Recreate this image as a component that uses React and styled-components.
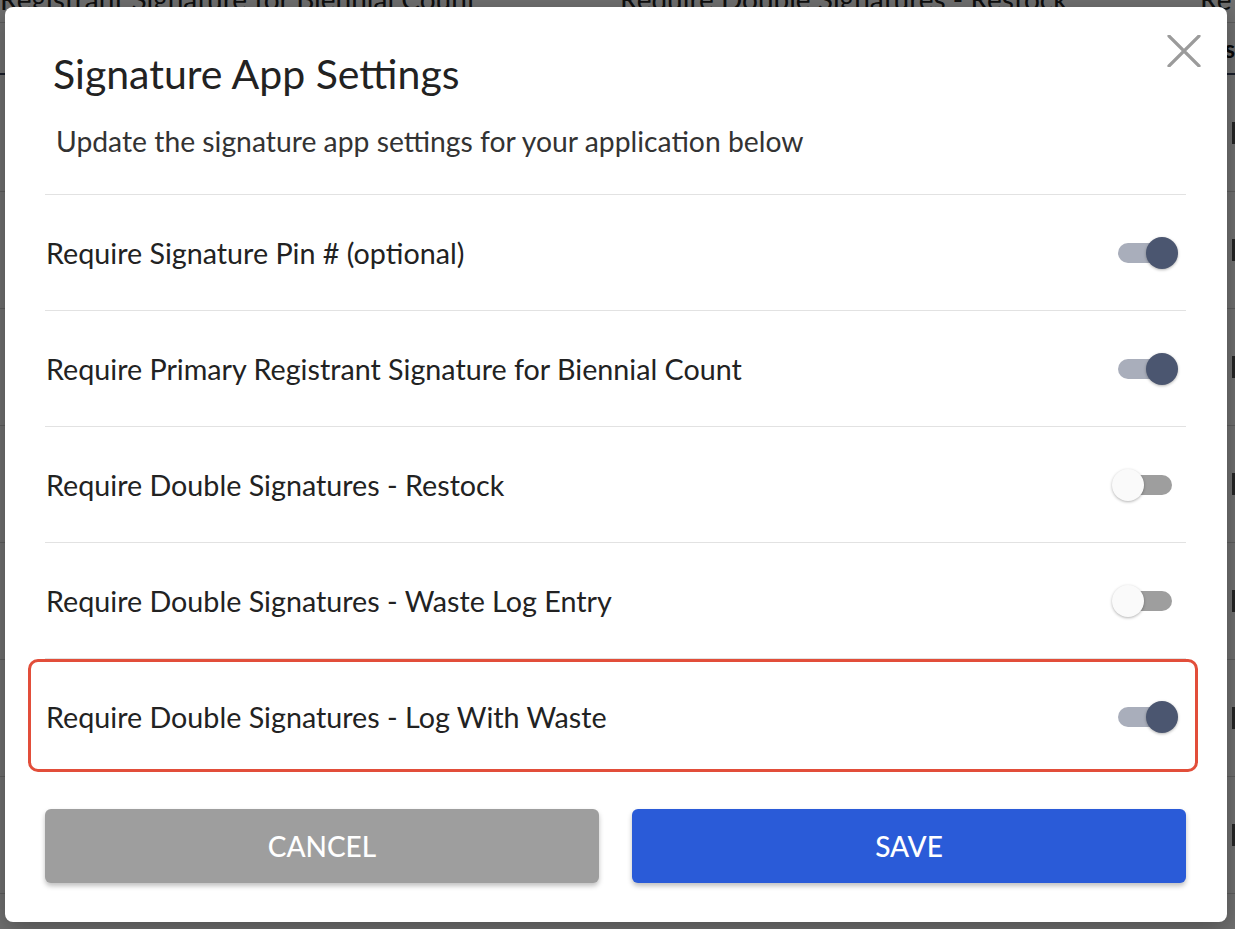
import React, { useState } from "react";
import styled, { createGlobalStyle } from "styled-components";

const GlobalStyle = createGlobalStyle`
  html, body {
    margin: 0;
    padding: 0;
    background: #ffffff;
  }
  body {
    font-family: Lato, "Open Sans", "Liberation Sans", sans-serif;
    -webkit-font-smoothing: antialiased;
  }
`;

const settingsList = [
  { id: "pin", label: "Require Signature Pin # (optional)", on: true },
  { id: "biennial", label: "Require Primary Registrant Signature for Biennial Count", on: true },
  { id: "restock", label: "Require Double Signatures - Restock", on: false },
  { id: "waste", label: "Require Double Signatures - Waste Log Entry", on: false },
  { id: "logwaste", label: "Require Double Signatures - Log With Waste", on: true, highlighted: true },
];

function App() {
  const [settings, setSettings] = useState(settingsList);

  const toggle = (id) =>
    setSettings((prev) => prev.map((s) => (s.id === id ? { ...s, on: !s.on } : s)));

  return (
    <Page>
      <GlobalStyle />
      <BackTable>
        <BackRow $first>
          <BackCell $width="620px">Registrant Signature for Biennial Count</BackCell>
          <BackCell $width="580px">Require Double Signatures - Restock</BackCell>
          <BackCell>Re</BackCell>
        </BackRow>
        <BackHead>s</BackHead>
        {[0, 1, 2, 3, 4, 5, 6].map((i) => (
          <BackRow key={i}>
            <BackPill />
          </BackRow>
        ))}
      </BackTable>
      <Overlay />

      <Modal>
        <CloseButton aria-label="Close">
          <svg width="34" height="32" viewBox="0 0 34 32">
            <path d="M2 1 L32 31 M32 1 L2 31" stroke="#9b9b9b" strokeWidth="3.2" strokeLinecap="round" fill="none" />
          </svg>
        </CloseButton>

        <Header>
          <Title>Signature App Settings</Title>
          <Subtitle>Update the signature app settings for your application below</Subtitle>
        </Header>

        <SettingsList>
          {settings.map((s, i) => (
            <SettingRow key={s.id} $last={i === settings.length - 1} $highlighted={s.highlighted}>
              <SettingLabel>{s.label}</SettingLabel>
              <Switch $on={s.on} onClick={() => toggle(s.id)} role="switch" aria-checked={s.on}>
                <Track $on={s.on} />
                <Knob $on={s.on} />
              </Switch>
            </SettingRow>
          ))}
        </SettingsList>

        <Actions>
          <ActionButton $variant="cancel">CANCEL</ActionButton>
          <ActionButton $variant="save">SAVE</ActionButton>
        </Actions>
      </Modal>
    </Page>
  );
}

const Page = styled.div`
  position: relative;
  width: 1235px;
  height: 929px;
  overflow: hidden;
  background: #ffffff;
`;

const BackTable = styled.div`
  display: flex;
  flex-direction: column;
  margin-top: -24px;
`;

const BackRow = styled.div`
  display: flex;
  align-items: center;
  height: ${(p) => (p.$first ? "46px" : "116px")};
  border-bottom: 1px solid #d6d6d6;
  font-size: 28px;
  color: #222;
`;

const BackHead = styled.div`
  display: flex;
  align-items: center;
  justify-content: flex-end;
  height: 50px;
  border-bottom: 2px solid #3a4660;
  font-size: 24px;
  font-weight: 700;
  color: #111;
`;

const BackCell = styled.div`
  flex: ${(p) => (p.$width ? `0 0 ${p.$width}` : "1")};
  white-space: nowrap;
  overflow: hidden;
`;

const BackPill = styled.div`
  width: 14px;
  height: 22px;
  margin-left: 1232px;
  background: #555;
`;

const Overlay = styled.div`
  position: absolute;
  inset: 0;
  background: rgba(0, 0, 0, 0.56);
`;

const Modal = styled.div`
  position: absolute;
  left: 5px;
  top: 7px;
  width: 1222px;
  height: 915px;
  box-sizing: border-box;
  padding: 44px 41px 39px 40px;
  background: #ffffff;
  border-radius: 8px;
  box-shadow: 0 6px 24px rgba(0, 0, 0, 0.3);
  display: flex;
  flex-direction: column;
`;

const CloseButton = styled.button`
  position: absolute;
  top: 28px;
  right: 26px;
  padding: 0;
  border: none;
  background: transparent;
  cursor: pointer;
  display: flex;
`;

const Header = styled.div`
  display: flex;
  flex-direction: column;
  gap: 28px;
  padding-bottom: 37px;
  border-bottom: 1px solid #e2e2e2;
`;

const Title = styled.h2`
  margin: 0 0 0 8px;
  font-size: 41px;
  line-height: 46px;
  font-weight: 400;
  color: #222;
`;

const Subtitle = styled.p`
  margin: 0 0 0 11px;
  font-size: 28.3px;
  line-height: 32px;
  font-weight: 400;
  color: #333;
`;

const SettingsList = styled.div`
  display: flex;
  flex-direction: column;
`;

const SettingRow = styled.div`
  position: relative;
  display: flex;
  align-items: center;
  justify-content: space-between;
  height: 115px;
  border-bottom: ${(p) => (p.$last ? "none" : "1px solid #e2e2e2")};

  &::after {
    content: "";
    display: ${(p) => (p.$highlighted ? "block" : "none")};
    position: absolute;
    left: -17px;
    right: -12px;
    top: 0;
    bottom: 2px;
    border: 3px solid #e24e3a;
    border-radius: 10px;
    pointer-events: none;
  }
`;

const SettingLabel = styled.span`
  font-size: 28.7px;
  color: #222;
  margin-left: 1px;
`;

const Switch = styled.div`
  position: relative;
  width: 66px;
  height: 32px;
  margin-right: 8px;
  cursor: pointer;
`;

const Track = styled.div`
  position: absolute;
  left: 6px;
  right: 6px;
  top: 6px;
  height: 20px;
  border-radius: 10px;
  background: ${(p) => (p.$on ? "#a9aebb" : "#9e9e9e")};
`;

const Knob = styled.div`
  position: absolute;
  top: 0;
  left: ${(p) => (p.$on ? "34px" : "0")};
  width: 32px;
  height: 32px;
  border-radius: 50%;
  background: ${(p) => (p.$on ? "#4b5670" : "#fafafa")};
  box-shadow: 0 1px 3px rgba(0, 0, 0, 0.3);
`;

const Actions = styled.div`
  display: grid;
  grid-template-columns: 1fr 1fr;
  gap: 33px;
  margin-top: auto;
`;

const ActionButton = styled.button`
  height: 74px;
  border: none;
  border-radius: 6px;
  font-family: Lato, "Open Sans", "Liberation Sans", sans-serif;
  font-size: 28px;
  font-weight: 500;
  color: #ffffff;
  background: ${(p) => (p.$variant === "save" ? "#2a5bd8" : "#9e9e9e")};
  box-shadow: 0 3px 5px rgba(0, 0, 0, 0.25);
  cursor: pointer;
`;

export default App;
